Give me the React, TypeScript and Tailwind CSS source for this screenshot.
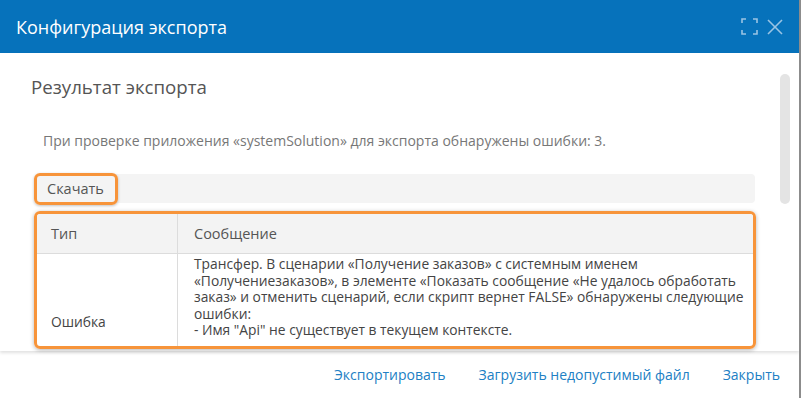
import React from "react";

const font = { fontFamily: '"Open Sans", "Noto Sans", sans-serif' };

export default function App() {
  return (
    <div className="w-[801px] h-[398px] bg-white flex flex-col border-r-2 border-[#8c8c8c] overflow-hidden" style={font}>
      {/* Header */}
      <div className="h-[53px] shrink-0 bg-[#0672bb] flex items-center pl-4 pr-[16px]">
        <div className="text-white text-[18px] leading-6 flex-1">Конфигурация экспорта</div>
        <svg width="17" height="17" viewBox="0 0 17 17" className="mr-[9px]" fill="none" stroke="#9ac4e4" strokeWidth="1.6">
          <path d="M1 5V1H5" />
          <path d="M12 1H16V5" />
          <path d="M16 12V16H12" />
          <path d="M5 16H1V12" />
        </svg>
        <svg width="16" height="16" viewBox="0 0 16 16" fill="none" stroke="#9ac4e4" strokeWidth="1.6">
          <path d="M1 1L15 15" />
          <path d="M15 1L1 15" />
        </svg>
      </div>

      {/* Content area */}
      <div className="h-[298px] shrink-0 flex relative z-10 shadow-[0_2px_3px_rgba(0,0,0,0.12)]">
        <div className="flex-1 flex flex-col pt-[22px] pl-[31px]">
          <div className="text-[18.7px] leading-6 text-[#555]">Результат экспорта</div>
          <div className="mt-[32px] pl-[12px] text-[14px] leading-5 text-[#777]">
            При проверке приложения «systemSolution» для экспорта обнаружены ошибки: 3.
          </div>
          <div className="mt-[23px] ml-[6px] w-[718px] h-[29px] bg-[#f4f4f4] rounded-[4px] flex items-center">
            <div className="-ml-[3px] h-[32px] border-[3px] border-[#f7943a] rounded-[6px] shadow-[0_1px_3px_rgba(0,0,0,0.25)] flex items-center pl-[10px] pr-[11px] text-[14.5px] text-[#555]">
              Скачать
            </div>
          </div>
          <div className="mt-[8px] ml-[3px] w-[722px] h-[138px] border-[3px] border-[#f7943a] rounded-[6px] shadow-[0_1px_4px_rgba(0,0,0,0.3)] overflow-hidden">
            <div className="h-[40px] bg-[#f3f3f3] border-b border-[#dcdcdc] flex text-[14.5px] text-[#555]">
              <div className="w-[141px] border-r border-[#dcdcdc] flex items-center pl-[14px]">Тип</div>
              <div className="flex-1 flex items-center pl-[16px]">Сообщение</div>
            </div>
            <div className="flex h-[100px] text-[13.8px] leading-[16.5px] text-[#444]">
              <div className="w-[141px] border-r border-[#dcdcdc] pl-[14px] pt-[60px]">Ошибка</div>
              <div className="flex-1 pl-[16px] pt-[2px] pr-2">
                <div>Трансфер. В сценарии «Получение заказов» с системным именем</div>
                <div>«Получениезаказов», в элементе «Показать сообщение «Не удалось обработать</div>
                <div>заказ» и отменить сценарий, если скрипт вернет FALSE» обнаружены следующие</div>
                <div>ошибки:</div>
                <div>- Имя "Api" не существует в текущем контексте.</div>
              </div>
            </div>
          </div>
        </div>
        <div className="w-[19px] shrink-0 pt-[21px]">
          <div className="w-[10px] h-[130px] rounded-full bg-[#e4e4e4]" />
        </div>
      </div>

      {/* Footer */}
      <div className="flex-1 flex items-center justify-end pr-[19px] gap-[33px] text-[14px] text-[#2180c4]">
        <span>Экспортировать</span>
        <span>Загрузить недопустимый файл</span>
        <span>Закрыть</span>
      </div>
    </div>
  );
}
